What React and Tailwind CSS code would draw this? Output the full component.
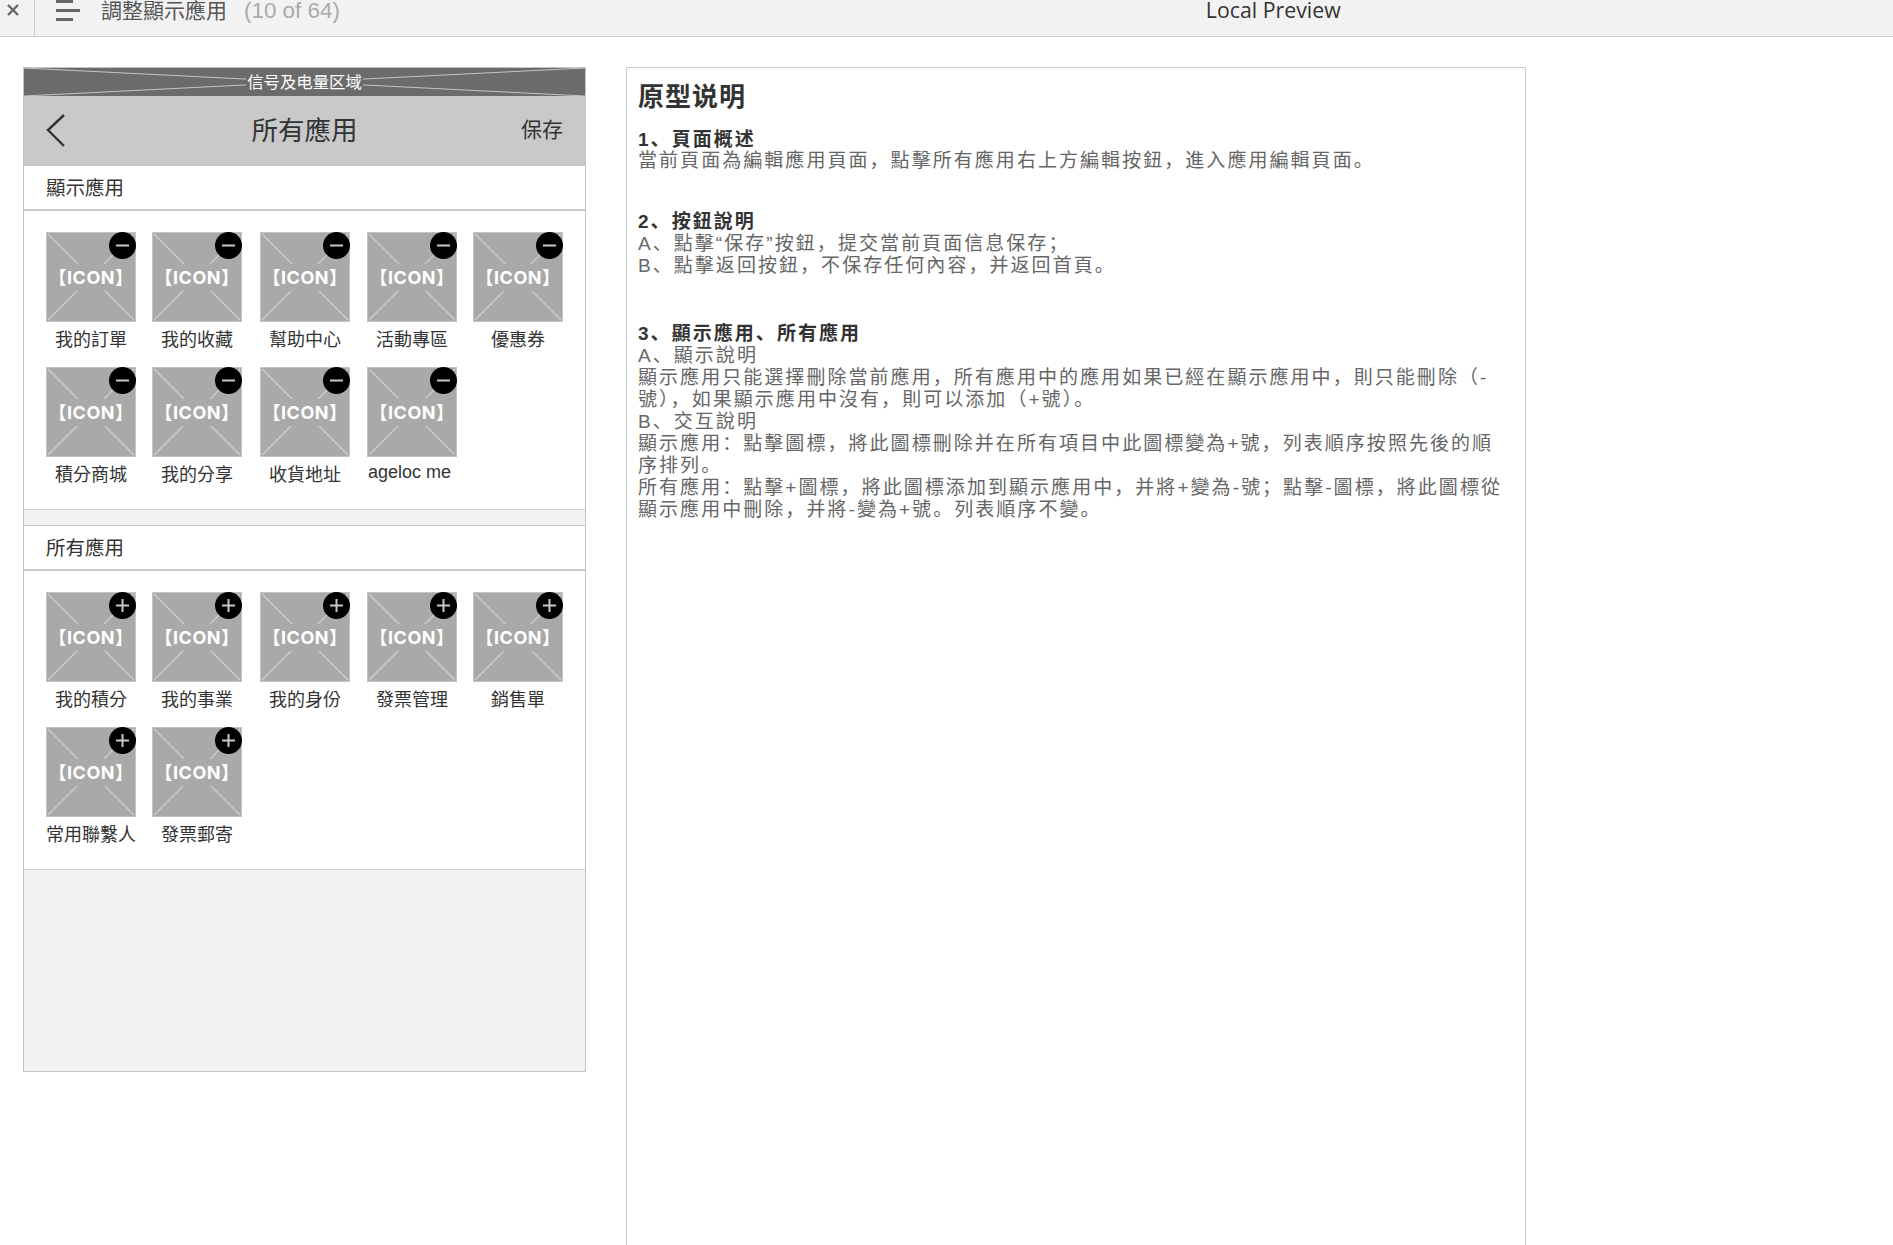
const shown = ["我的訂單", "我的收藏", "幫助中心", "活動專區", "優惠券", "積分商城", "我的分享", "收貨地址", "ageloc me"];
const all = ["我的積分", "我的事業", "我的身份", "發票管理", "銷售單", "常用聯繫人", "發票郵寄"];
const CJK = "font-['Liberation_Sans','Noto_Sans_CJK_TC',sans-serif]";

function Badge({ plus }) {
  return (
    <div className="absolute -top-px -right-px flex h-[27px] w-[27px] items-center justify-center rounded-full bg-black">
      <svg width="15" height="15" viewBox="0 0 15 15" stroke="#c8c8c8" strokeWidth="2">
        <path d="M1 7.5H14" />
        {plus && <path d="M7.5 1V14" />}
      </svg>
    </div>
  );
}

function Tile({ label, plus }) {
  const latin = label === "ageloc me";
  return (
    <div className="w-[90px]">
      <div className="relative h-[90px] w-[90px] border border-[#c4c4c4] bg-[#a9a9a9]">
        <svg className="absolute inset-0 h-full w-full" viewBox="0 0 88 88" stroke="#d0d0d0" strokeWidth="1.2">
          <path d="M1 1L87 87M87 1L1 87" />
        </svg>
        <div className="absolute inset-x-0 top-[31px] flex h-[27px] items-center justify-center bg-[#a9a9a9] font-['Inter','Noto_Sans_CJK_TC',sans-serif] text-[18px] font-bold tracking-[0.5px] whitespace-nowrap text-white">
          【ICON】
        </div>
        <Badge plus={plus} />
      </div>
      {latin ? (
        <div className="mt-[4px] pl-[1px] text-[18px] leading-[22px] whitespace-nowrap text-[#333]">{label}</div>
      ) : (
        <div className="mt-[7px] text-center text-[18px] leading-[22px] whitespace-nowrap text-[#333]">{label}</div>
      )}
    </div>
  );
}

function Grid({ items, plus }) {
  return (
    <div className="grid grid-cols-[106px_108px_107px_106px_90px] gap-y-[16px] pt-[21px] pb-[23px] pl-[22px]">
      {items.map((t) => (
        <Tile key={t} label={t} plus={plus} />
      ))}
    </div>
  );
}

function Heading({ children }) {
  return (
    <div className="flex h-[45px] items-center border-b-2 border-[#ccc] pt-[3px] pl-[22px] text-[19.5px] text-[#333]">
      {children}
    </div>
  );
}

function Phone() {
  return (
    <div className="flex h-[1005px] w-[563px] shrink-0 flex-col border border-[#c4c4c4] bg-white">
      <div className="relative flex h-[28px] items-center justify-center bg-[#6b6b6b]">
        <svg className="absolute inset-0 h-full w-full" viewBox="0 0 561 28" preserveAspectRatio="none" stroke="#c4c4c4" strokeWidth="1">
          <path d="M0 0L561 28M561 0L0 28" />
        </svg>
        <span className="relative bg-[#6b6b6b] px-[1px] text-[16.4px] leading-[20px] text-white">信号及电量区域</span>
      </div>
      <div className="relative flex h-[70px] items-center justify-center bg-[#c9c9c9] pt-[2px]">
        <svg className="absolute top-[18px] left-[22px]" width="20" height="33" viewBox="0 0 20 33" fill="none" stroke="#333" strokeWidth="2.4">
          <path d="M18 1L2 16L18 32" />
        </svg>
        <span className="text-[26.5px] text-[#333]">所有應用</span>
        <span className="absolute top-[22px] right-[22px] text-[21px] leading-[24px] text-[#333]">保存</span>
      </div>
      <Heading>顯示應用</Heading>
      <Grid items={shown} />
      <div className="h-[17px] border-y border-[#ccc] bg-[#f2f2f2]" />
      <Heading>所有應用</Heading>
      <Grid items={all} plus />
      <div className="flex-1 border-t border-[#ccc] bg-[#f2f2f2]" />
    </div>
  );
}

function Notes() {
  return (
    <div className="ml-[40px] h-[1300px] w-[900px] shrink-0 border border-[#ccc] bg-white pt-[11px] pl-[11px] font-['Liberation_Sans','Noto_Sans_CJK_SC',sans-serif] text-[19px] leading-[22px] tracking-[2.05px] whitespace-nowrap text-[#666]">
      <div className="text-[26px] leading-[36px] font-bold tracking-[1px] text-[#333]">原型说明</div>
      <div className="mt-[14px] leading-[21px] font-bold text-[#333]">1、頁面概述</div>
      <div>當前頁面為編輯應用頁面，點擊所有應用右上方編輯按鈕，進入應用編輯頁面。</div>
      <div className="mt-[39px] font-bold text-[#333]">2、按鈕說明</div>
      <div>A、點擊“保存”按鈕，提交當前頁面信息保存；</div>
      <div>B、點擊返回按鈕，不保存任何內容，并返回首頁。</div>
      <div className="mt-[46px] font-bold text-[#333]">3、顯示應用、所有應用</div>
      <div>A、顯示說明</div>
      <div>顯示應用只能選擇刪除當前應用，所有應用中的應用如果已經在顯示應用中，則只能刪除（-</div>
      <div>號），如果顯示應用中沒有，則可以添加（+號）。</div>
      <div>B、交互說明</div>
      <div>顯示應用：點擊圖標，將此圖標刪除并在所有項目中此圖標變為+號，列表順序按照先後的順</div>
      <div>序排列。</div>
      <div>所有應用：點擊+圖標，將此圖標添加到顯示應用中，并將+變為-號；點擊-圖標，將此圖標從</div>
      <div>顯示應用中刪除，并將-變為+號。列表順序不變。</div>
    </div>
  );
}

function TopBar() {
  return (
    <div className="flex h-[37px] items-start border-b border-[#ccc] bg-[#f2f2f2]">
      <div className="flex h-full w-[35px] justify-start border-r border-[#ccc] pt-[4px] pl-[7px]">
        <svg width="12" height="12" viewBox="0 0 12 12" stroke="#666" strokeWidth="2.4">
          <path d="M1 1L11 11M11 1L1 11" />
        </svg>
      </div>
      <svg className="ml-[21px]" width="24" height="21" viewBox="0 0 24 21" stroke="#666" strokeWidth="3">
        <path d="M0 1.5H17M0 10.5H24M0 19.5H17" />
      </svg>
      <div className="ml-[21px] text-[21px] leading-[22px] text-[#555]">調整顯示應用</div>
      <div className="ml-[17px] text-[22.4px] leading-[22px] text-[#aaa]">(10 of 64)</div>
      <div className="ml-[866px] font-['Open_Sans',sans-serif] text-[21.3px] leading-[20px] text-[#333]">Local Preview</div>
    </div>
  );
}

export default function App() {
  return (
    <div className={`h-[1245px] w-[1893px] overflow-hidden bg-white ${CJK}`}>
      <TopBar />
      <div className="flex pt-[30px] pl-[23px]">
        <Phone />
        <Notes />
      </div>
    </div>
  );
}
